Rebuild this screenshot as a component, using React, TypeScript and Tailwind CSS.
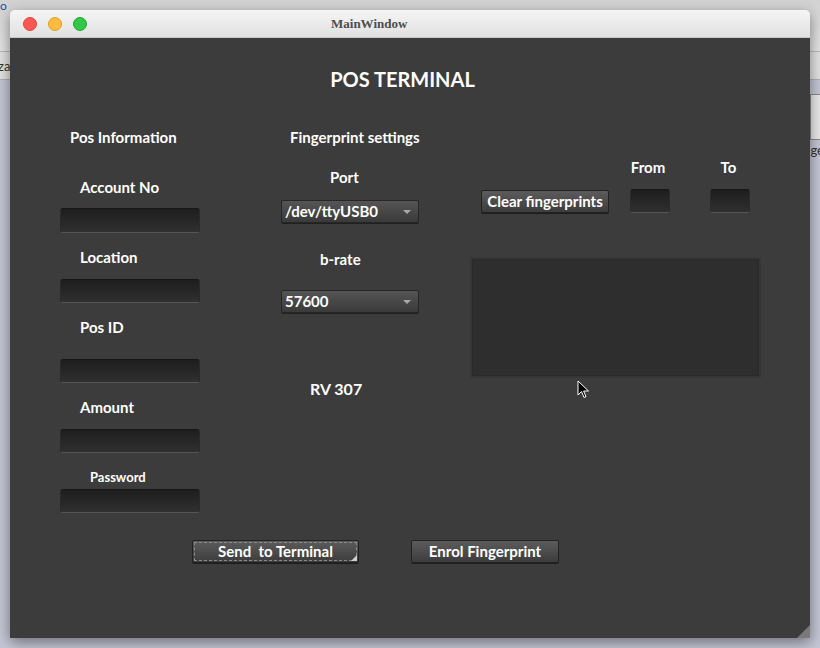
import React from "react";

const font = { fontFamily: "Lato, 'Noto Sans', sans-serif" };

function Field({ w = 140, h = 24, className = "" }: { w?: number; h?: number; className?: string }) {
  return (
    <div
      className={`rounded-[3px] border border-[#2a2a2a] border-t-[#161616] border-b-[#555555] bg-gradient-to-b from-[#1e1e1e] to-[#303030] ${className}`}
      style={{ width: w, height: h }}
    />
  );
}

function Combo({ value, className = "" }: { value: string; className?: string }) {
  return (
    <div
      className={`flex h-[23px] w-[138px] items-center justify-between rounded-[2px] border border-[#262626] bg-gradient-to-b from-[#555555] to-[#3a3a3a] pl-[3px] pr-[7px] text-[15px] font-bold text-white shadow-[0_1px_0_#202020] ${className}`}
    >
      <span className="leading-none">{value}</span>
      <span className="h-0 w-0 border-x-[4px] border-t-[4px] border-x-transparent border-t-[#a8a8a8]" />
    </div>
  );
}

function Button({
  label,
  className = "",
  focused = false,
}: {
  label: string;
  className?: string;
  focused?: boolean;
}) {
  return (
    <div
      className={`relative flex h-[23px] items-center justify-center rounded-[2px] border border-[#222222] bg-gradient-to-b from-[#5c5c5c] to-[#3c3c3c] text-[15px] font-bold text-white shadow-[0_1px_0_#1e1e1e] ${className}`}
    >
      {focused && (
        <span className="pointer-events-none absolute inset-[1px] border border-dashed border-[#8a8a8a]" />
      )}
      <span className="leading-none">{label}</span>
      {focused && (
        <span className="absolute bottom-[1px] right-[1px] h-0 w-0 border-b-[6px] border-l-[6px] border-b-[#d0d0d0] border-l-transparent" />
      )}
    </div>
  );
}

function Label({ text, className = "" }: { text: string; className?: string }) {
  return (
    <div className={`h-[18px] whitespace-nowrap text-[15px] font-bold leading-[18px] text-white ${className}`}>
      {text}
    </div>
  );
}

export default function App() {
  return (
    <div className="relative h-[648px] w-[820px] overflow-hidden bg-[#c4c6d5]" style={font}>
      {/* desktop behind the window */}
      <div className="h-[52px] border-b border-[#b8b8b8] bg-gradient-to-b from-[#d2d2d2] to-[#e4e4e4]">
        <div className="pl-0 pt-0 text-[12px] leading-[12px] text-[#2050a0]">o</div>
      </div>
      <div className="h-[28px] border-b border-[#b0b0b0] bg-[#e2e2e2] text-[13px] leading-[28px] text-[#333]">
        <span className="-ml-[2px]">za</span>
      </div>
      <div className="flex justify-end">
        <div className="mr-[-4px] mt-[14px] h-[46px] w-[14px] border border-[#8a8a8a] bg-[#e8e8e8]" />
      </div>
      <div className="mt-[3px] flex justify-end text-[13px] leading-[14px] text-[#333]">
        <span className="mr-[-4px]">ge</span>
      </div>

      {/* window */}
      <div className="absolute left-[10px] top-[10px] flex h-[628px] w-[800px] flex-col overflow-hidden rounded-t-[5px] shadow-[0_4px_14px_rgba(0,0,0,0.45)]">
        <div className="relative flex h-[28px] items-center border-b border-[#c8c8c8] bg-gradient-to-b from-[#f5f5f5] to-[#e1e1e1] pl-[13px]">
          <div className="flex gap-[11px]">
            <span className="h-[14px] w-[14px] rounded-full border border-[#e0443e] bg-[#fc5753]" />
            <span className="h-[14px] w-[14px] rounded-full border border-[#dea123] bg-[#fdbc40]" />
            <span className="h-[14px] w-[14px] rounded-full border border-[#1aab29] bg-[#33c748]" />
          </div>
          <div
            className="absolute left-[321px] top-0 text-[13px] font-bold leading-[28px] text-[#4d4d4d]"
            style={{ fontFamily: "'Liberation Serif', serif" }}
          >
            MainWindow
          </div>
        </div>

        <div className="relative flex flex-1 flex-col bg-[#3c3c3c]">
          <div className="mt-[30px] pr-[15px] text-center text-[20px] font-bold leading-[22px] text-white">
            POS TERMINAL
          </div>

          <div className="mt-[38px] flex pl-[50px]">
            {/* left column */}
            <div className="flex w-[140px] flex-col">
              <Label text="Pos Information" className="pl-[10px]" />
              <Label text="Account No" className="mt-[32px] pl-[20px]" />
              <Field h={25} className="mt-[12px]" />
              <Label text="Location" className="mt-[15px] pl-[20px]" />
              <Field className="mt-[13px]" />
              <Label text="Pos ID" className="mt-[15px] pl-[20px]" />
              <Field className="mt-[23px]" />
              <Label text="Amount" className="mt-[15px] pl-[20px]" />
              <Field className="mt-[13px]" />
              <div className="mt-[16px] h-[16px] pl-[30px] text-[13px] font-bold leading-[16px] text-white">
                Password
              </div>
              <Field className="mt-[4px]" />
            </div>

            {/* middle column */}
            <div className="ml-[81px] flex w-[141px] flex-col">
              <div className="overflow-hidden">
                <Label text="Fingerprint settings" className="pl-[9px]" />
              </div>
              <Label text="Port" className="mt-[22px] pl-[49px]" />
              <Combo value="/dev/ttyUSB0" className="mt-[14px]" />
              <Label text="b-rate" className="mt-[27px] pl-[39px]" />
              <Combo value="57600" className="mt-[22px]" />
              <div className="mt-[67px] h-[18px] pl-[29px] text-[16px] font-bold leading-[18px] text-white">
                RV 307
              </div>
            </div>

            {/* right column */}
            <div className="ml-[48px] flex w-[291px] flex-col">
              <div className="mt-[30px] flex items-end">
                <Button label="Clear fingerprints" className="ml-[11px] w-[128px]" />
                <div className="ml-[21px] flex w-[40px] flex-col items-center">
                  <Label text="From" className="ml-[-4px]" />
                  <Field w={40} className="mt-[13px]" />
                </div>
                <div className="ml-[40px] flex w-[40px] flex-col items-center">
                  <Label text="To" className="ml-[-3px]" />
                  <Field w={40} className="mt-[13px]" />
                </div>
              </div>
              <div className="mt-[44px] h-[121px] w-[291px] border-2 border-[#363636] bg-[#2e2e2e] shadow-[inset_0_0_0_1px_#2a2a2a]" />
            </div>
          </div>

          <div className="mt-[27px] flex pl-[182px]">
            <Button label="Send  to Terminal" focused className="w-[167px] whitespace-pre" />
            <Button label="Enrol Fingerprint" className="ml-[52px] w-[148px]" />
          </div>

          {/* resize grip */}
          <span className="absolute bottom-0 right-0 h-0 w-0 border-b-[13px] border-l-[13px] border-b-[#7a7a7a] border-l-transparent" />

          {/* mouse pointer */}
          <svg
            className="absolute left-[567px] top-[342px]"
            width="13"
            height="20"
            viewBox="0 0 13 20"
          >
            <path
              d="M1 1 L1 15 L4.5 11.5 L7 17.5 L9 16.6 L6.6 11 L11.5 11 Z"
              fill="#000"
              stroke="#fff"
              strokeWidth="1"
              strokeLinejoin="round"
            />
          </svg>
        </div>
      </div>
    </div>
  );
}
